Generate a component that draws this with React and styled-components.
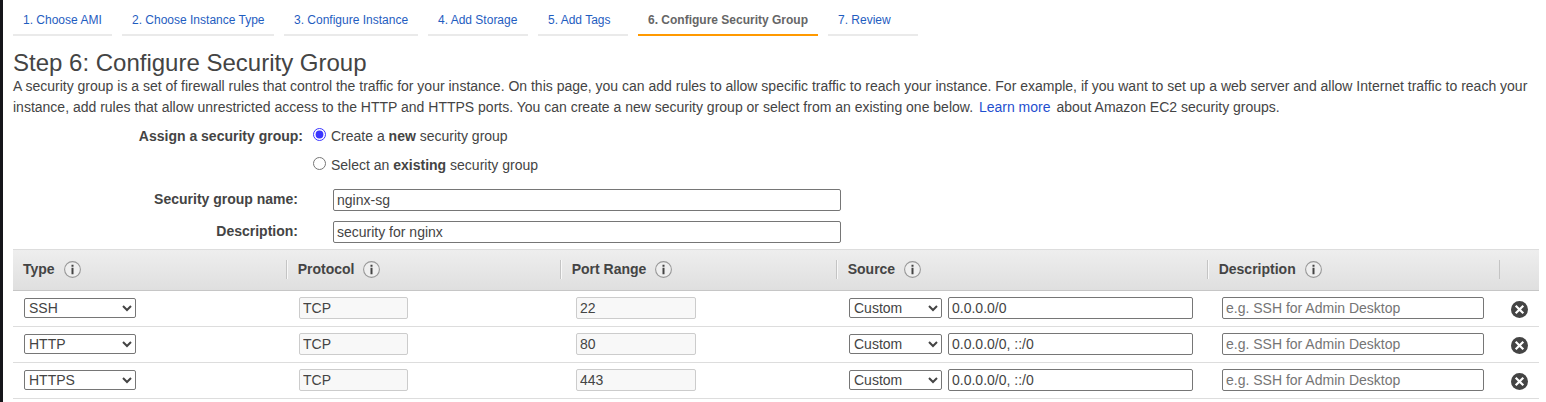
import React, { useState } from "react";
import styled, { createGlobalStyle } from "styled-components";

const GlobalStyle = createGlobalStyle`
  *, *::before, *::after { box-sizing: border-box; }
  body {
    margin: 0;
    background: #fff;
    color: #444;
    font: 14px/21px "Liberation Sans", Arial, sans-serif;
  }
`;

const Page = styled.div`
  height: 402px;
  overflow: hidden;
  border-left: 3px solid #16161a;
  padding: 0 7px 0 10px;
`;

const Steps = styled.nav`
  display: flex;
  gap: 10px;
  height: 36px;
  padding-top: 10px;
`;

const Step = styled.a`
  width: ${(p) => p.$width}px;
  padding-left: 10px;
  font-size: 12px;
  line-height: 20px;
  white-space: nowrap;
  cursor: pointer;
  font-weight: ${(p) => (p.$active ? "bold" : "normal")};
  color: ${(p) => (p.$active ? "#666" : "#1f5dbf")};
  border-bottom: 2px solid ${(p) => (p.$active ? "#f90" : "#eaeaea")};
`;

const Title = styled.h1`
  margin: 13px 0 0;
  font-size: 24px;
  font-weight: normal;
  line-height: 27px;
`;

const Intro = styled.p`
  margin: 0;
`;

const Link = styled.a`
  color: #1f4fcf;
  margin: 0 2px;
`;

const Assign = styled.div`
  display: grid;
  grid-template-columns: 290px auto;
  justify-content: start;
  column-gap: 10px;
  padding-top: 8px;
`;

const AssignLabel = styled.div`
  font-weight: bold;
  text-align: right;
`;

const Options = styled.div`
  display: flex;
  flex-direction: column;
  gap: 8px;
`;

const Option = styled.label`
  display: flex;
  gap: 5px;
`;

const Radio = styled.input`
  width: 13px;
  height: 13px;
  margin: 2px 0 0;
  accent-color: #3b35ff;
`;

const Field = styled.label`
  display: grid;
  grid-template-columns: 285px 508px;
  column-gap: 35px;
  height: 22px;
  margin-top: ${(p) => p.$gap}px;
`;

const FieldLabel = styled.span`
  font-weight: bold;
  text-align: right;
  line-height: 20px;
`;

const Input = styled.input`
  display: block;
  width: ${(p) => p.$width}px;
  height: 22px;
  margin: 0;
  padding: 1px 3px;
  font: inherit;
  line-height: normal;
  color: #444;
  background: #fff;
  border: 1px solid #767676;
  border-radius: 2px;
  &::placeholder { color: #757575; }
  &:disabled {
    color: #444;
    background: #f8f8f8;
    border-color: #ccc;
  }
`;

const Select = styled.select`
  width: ${(p) => p.$width}px;
  height: 20px;
  margin: 0;
  padding: 0;
  font: inherit;
  line-height: normal;
  color: #444;
  background-color: #fff;
  border: 1px solid #767676;
  border-radius: 2px;
`;

const Rules = styled.section`
  margin-top: 6px;
`;

const columns = "273px 274px 276px 371px 292px 40px";

const Header = styled.div`
  display: grid;
  grid-template-columns: ${columns};
  align-items: center;
  height: 42px;
  padding-bottom: 1px;
  border-top: 1px solid #ddd;
  border-bottom: 1px solid #c6c6c6;
  background: linear-gradient(#eee, #dfdfdf);
`;

const HeaderCell = styled.div`
  display: flex;
  align-items: center;
  gap: 9px;
  height: 19px;
  padding-left: 10px;
  font-weight: bold;
  &:not(:first-child) {
    border-left: 1px solid #c4c4c4;
    box-shadow: inset 1px 0 #f8f8f8;
    padding-left: 10.7px;
  }
  &:last-child { box-shadow: none; }
`;

const Row = styled.div`
  display: grid;
  grid-template-columns: ${columns};
  align-items: center;
  height: 36px;
  padding-bottom: 1px;
  border-bottom: 1px solid #ddd;
`;

const Cell = styled.div`
  display: flex;
  align-items: center;
  gap: 6px;
  padding-left: ${(p) => p.$inset}px;
`;

const DeleteButton = styled.button`
  display: block;
  width: 17px;
  height: 17px;
  margin: 3px 0 0;
  padding: 0;
  border: 0;
  background: none;
  cursor: pointer;
`;

const InfoIcon = () => (
  <svg width="17" height="17" viewBox="0 0 17 17" fill="none">
    <circle cx="8.5" cy="8.5" r="7.9" fill="#efefef" stroke="#999" strokeWidth="1.1" />
    <path d="M7.5 3.8h2v2h-2zM7.5 6.8h2v6.4h-2z" fill="#444" />
  </svg>
);

const DeleteIcon = () => (
  <svg width="17" height="17" viewBox="0 0 17 17" display="block">
    <circle cx="8.5" cy="8.5" r="8.5" fill="#444" />
    <path d="M4.7 4.7l7.6 7.6M12.3 4.7l-7.6 7.6" stroke="#fff" strokeWidth="2.2" />
  </svg>
);

const steps = [
  ["1. Choose AMI", 99],
  ["2. Choose Instance Type", 152],
  ["3. Configure Instance", 134],
  ["4. Add Storage", 100],
  ["5. Add Tags", 90],
  ["6. Configure Security Group", 180],
  ["7. Review", 90],
];

const headings = ["Type", "Protocol", "Port Range", "Source", "Description"];

const rules = [
  { type: "SSH", port: "22", source: "0.0.0.0/0" },
  { type: "HTTP", port: "80", source: "0.0.0.0/0, ::/0" },
  { type: "HTTPS", port: "443", source: "0.0.0.0/0, ::/0" },
];

export default function App() {
  const [mode, setMode] = useState("new");
  return (
    <Page>
      <GlobalStyle />
      <Steps>
        {steps.map(([name, width], i) => (
          <Step key={name} $width={width} $active={i === 5}>{name}</Step>
        ))}
      </Steps>
      <Title>Step 6: Configure Security Group</Title>
      <Intro>
        A security group is a set of firewall rules that control the traffic for your instance. On this page, you can add rules to allow specific traffic to reach your instance. For example, if you want to set up a web server and allow Internet traffic to reach your instance, add rules that allow unrestricted access to the HTTP and HTTPS ports. You can create a new security group or select from an existing one below. <Link>Learn more</Link> about Amazon EC2 security groups.
      </Intro>
      <Assign>
        <AssignLabel>Assign a security group:</AssignLabel>
        <Options>
          <Option>
            <Radio type="radio" name="mode" checked={mode === "new"} onChange={() => setMode("new")} />
            <span>Create a <b>new</b> security group</span>
          </Option>
          <Option>
            <Radio type="radio" name="mode" checked={mode === "existing"} onChange={() => setMode("existing")} />
            <span>Select an <b>existing</b> security group</span>
          </Option>
        </Options>
      </Assign>
      <Field $gap={13}>
        <FieldLabel>Security group name:</FieldLabel>
        <Input $width={508} defaultValue="nginx-sg" />
      </Field>
      <Field $gap={10}>
        <FieldLabel>Description:</FieldLabel>
        <Input $width={508} defaultValue="security for nginx" />
      </Field>
      <Rules>
        <Header>
          {headings.map((h) => (
            <HeaderCell key={h}>{h}<InfoIcon /></HeaderCell>
          ))}
          <HeaderCell />
        </Header>
        {rules.map((rule) => (
          <Row key={rule.type}>
            <Cell $inset={11}>
              <Select $width={112} defaultValue={rule.type}>
                {rules.map((r) => <option key={r.type}>{r.type}</option>)}
              </Select>
            </Cell>
            <Cell $inset={13}><Input $width={109} defaultValue="TCP" disabled /></Cell>
            <Cell $inset={16}><Input $width={120} defaultValue={rule.port} disabled /></Cell>
            <Cell $inset={13}>
              <Select $width={93}><option>Custom</option></Select>
              <Input $width={245} defaultValue={rule.source} />
            </Cell>
            <Cell $inset={15}><Input $width={262} placeholder="e.g. SSH for Admin Desktop" /></Cell>
            <Cell $inset={12}>
              <DeleteButton aria-label="Delete rule"><DeleteIcon /></DeleteButton>
            </Cell>
          </Row>
        ))}
      </Rules>
    </Page>
  );
}
